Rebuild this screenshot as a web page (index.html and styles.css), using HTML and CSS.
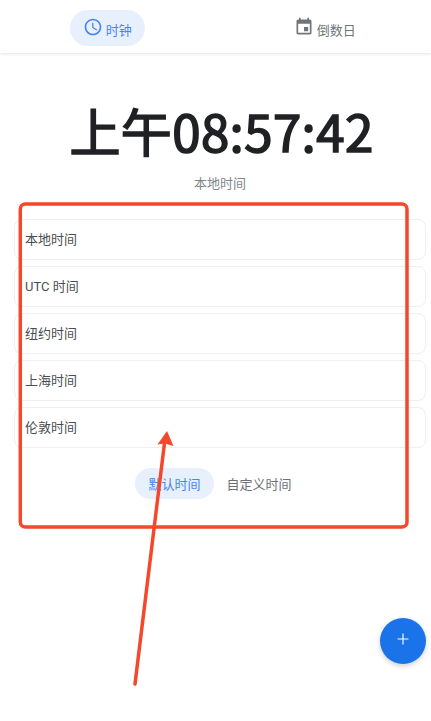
FILE: index.html
```html
<!DOCTYPE html>
<html lang="zh-CN">
    <head>
        <meta charset="UTF-8">
        <meta name="viewport" content="width=device-width, initial-scale=1">
        <title> 时钟 </title>
        <link rel="stylesheet" href="styles.css">
    </head>
    <body>
        <nav class="tabs">
            <div class="tab-slot">
                <a class="tab tab-active">
                    <svg class="tab-icon" viewBox="0 0 24 24"><path d="M11.99 2C6.47 2 2 6.48 2 12s4.47 10 9.99 10C17.52 22 22 17.52 22 12S17.52 2 11.99 2zM12 20c-4.42 0-8-3.58-8-8s3.58-8 8-8 8 3.58 8 8-3.58 8-8 8zm.5-13H11v6l5.25 3.15.75-1.23-4.5-2.67z"/></svg>
                    <span class="tab-label">时钟</span>
                </a>
            </div>
            <div class="tab-slot">
                <a class="tab">
                    <svg class="tab-icon" viewBox="0 0 24 24"><path d="M17 12h-5v5h5v-5zM16 1v2H8V1H6v2H5c-1.11 0-1.99.9-1.99 2L3 19c0 1.1.89 2 2 2h14c1.1 0 2-.9 2-2V5c0-1.1-.9-2-2-2h-1V1h-2zm3 18H5V8h14v11z"/></svg>
                    <span class="tab-label">倒数日</span>
                </a>
            </div>
        </nav>

        <main class="clock">
            <div class="clock-time">上午08:57:42</div>
            <div class="clock-zone">本地时间</div>

            <ul class="zones">
                <li class="zone">本地时间</li>
                <li class="zone">UTC 时间</li>
                <li class="zone">纽约时间</li>
                <li class="zone">上海时间</li>
                <li class="zone">伦敦时间</li>
            </ul>

            <div class="modes">
                <button class="mode mode-active">默认时间</button>
                <button class="mode">自定义时间</button>
            </div>
        </main>

        <button class="fab">
            <svg viewBox="0 0 24 24"><path d="M18.5 12.7h-5.800v5.800h-1.400v-5.800H5.500v-1.400h5.800V5.500h1.400v5.800h5.800v1.400z"/></svg>
        </button>

        <!-- red markup drawn on top of the screenshot -->
        <svg class="markup" viewBox="0 0 431 721">
            <rect x="20.3" y="204" width="386.700" height="323" rx="5" fill="none" stroke="#f4472b" stroke-width="3.500"/>
            <path d="M135 684 L164.500 443" fill="none" stroke="#f4472b" stroke-width="3.500" stroke-linecap="round"/>
            <path d="M167 431 L173.500 446 L165 443.500 L157.500 444.500 Z" fill="#f4472b"/>
        </svg>
    </body>
</html>
```

FILE: styles.css
```css
body {
    margin: 0;
    height: 721px;
    overflow: hidden;
    position: relative;
    background-color: #fff;
    color: #202124;
    font-family: "Roboto", "Noto Sans CJK SC", sans-serif;
}
.tabs {
    display: flex;
    height: 53px;
    padding-left: 1px;
    box-shadow: 0 1px 3px rgba(60, 64, 67, 0.14);
}
.tab-slot {
    flex: 1;
    display: flex;
    justify-content: center;
    padding-top: 10px;
}
.tab-slot + .tab-slot {
    padding-left: 5px;
}
.tab {
    display: flex;
    align-items: flex-start;
    gap: 3px;
    height: 36px;
    padding: 0 13px;
    border-radius: 18px;
    color: #70757a;
}
.tab-active {
    background-color: #e8f0fe;
    color: #4285f4;
}
.tab-icon {
    width: 20px;
    height: 20px;
    margin-top: 7px;
    fill: currentColor;
}
.tab-label {
    font-size: 13px;
    line-height: 18px;
    margin-top: 12px;
}
.clock {
    display: flex;
    flex-direction: column;
    align-items: center;
    padding: 0 5px 0 14px;
}
.clock-time {
    margin-top: 44px;
    margin-left: 3px;
    font-family: "Noto Sans CJK SC", sans-serif;
    font-size: 51px;
    font-weight: 400;
    line-height: 67px;
    letter-spacing: 0.4px;
    -webkit-text-stroke: 1.6px #202124;
}
.clock-zone {
    margin-top: 11px;
    font-size: 13px;
    line-height: 18px;
    color: #80868b;
}
.zones {
    list-style: none;
    margin: 0;
    padding: 0;
    margin-top: 26px;
    width: 100%;
    display: flex;
    flex-direction: column;
    gap: 6px;
}
.zone {
    height: 41px;
    padding-left: 10px;
    border: 1px solid #eeeff0;
    border-radius: 8px;
    box-sizing: border-box;
    font-size: 13px;
    line-height: 40px;
    color: #4a4e52;
}
.modes {
    display: flex;
    justify-content: center;
    margin-top: 20px;
}
.mode {
    height: 31px;
    padding: 0 13px;
    border: 0;
    border-radius: 16px;
    background: none;
    font-family: inherit;
    font-size: 13px;
    color: #6b6f73;
}
.mode-active {
    background-color: #e8f0fe;
    color: #4285f4;
}
.fab {
    position: absolute;
    left: 380px;
    top: 618px;
    width: 46px;
    height: 46px;
    padding: 0;
    border: 0;
    border-radius: 50%;
    background-color: #1a73e8;
    box-shadow: 0 2px 5px rgba(60, 64, 67, 0.25);
    display: flex;
    align-items: center;
    justify-content: center;
}
.fab svg {
    width: 20px;
    height: 20px;
    margin-top: -4px;
    fill: #fff;
}
.markup {
    position: absolute;
    left: 0;
    top: 0;
    width: 431px;
    height: 721px;
    pointer-events: none;
}
```
